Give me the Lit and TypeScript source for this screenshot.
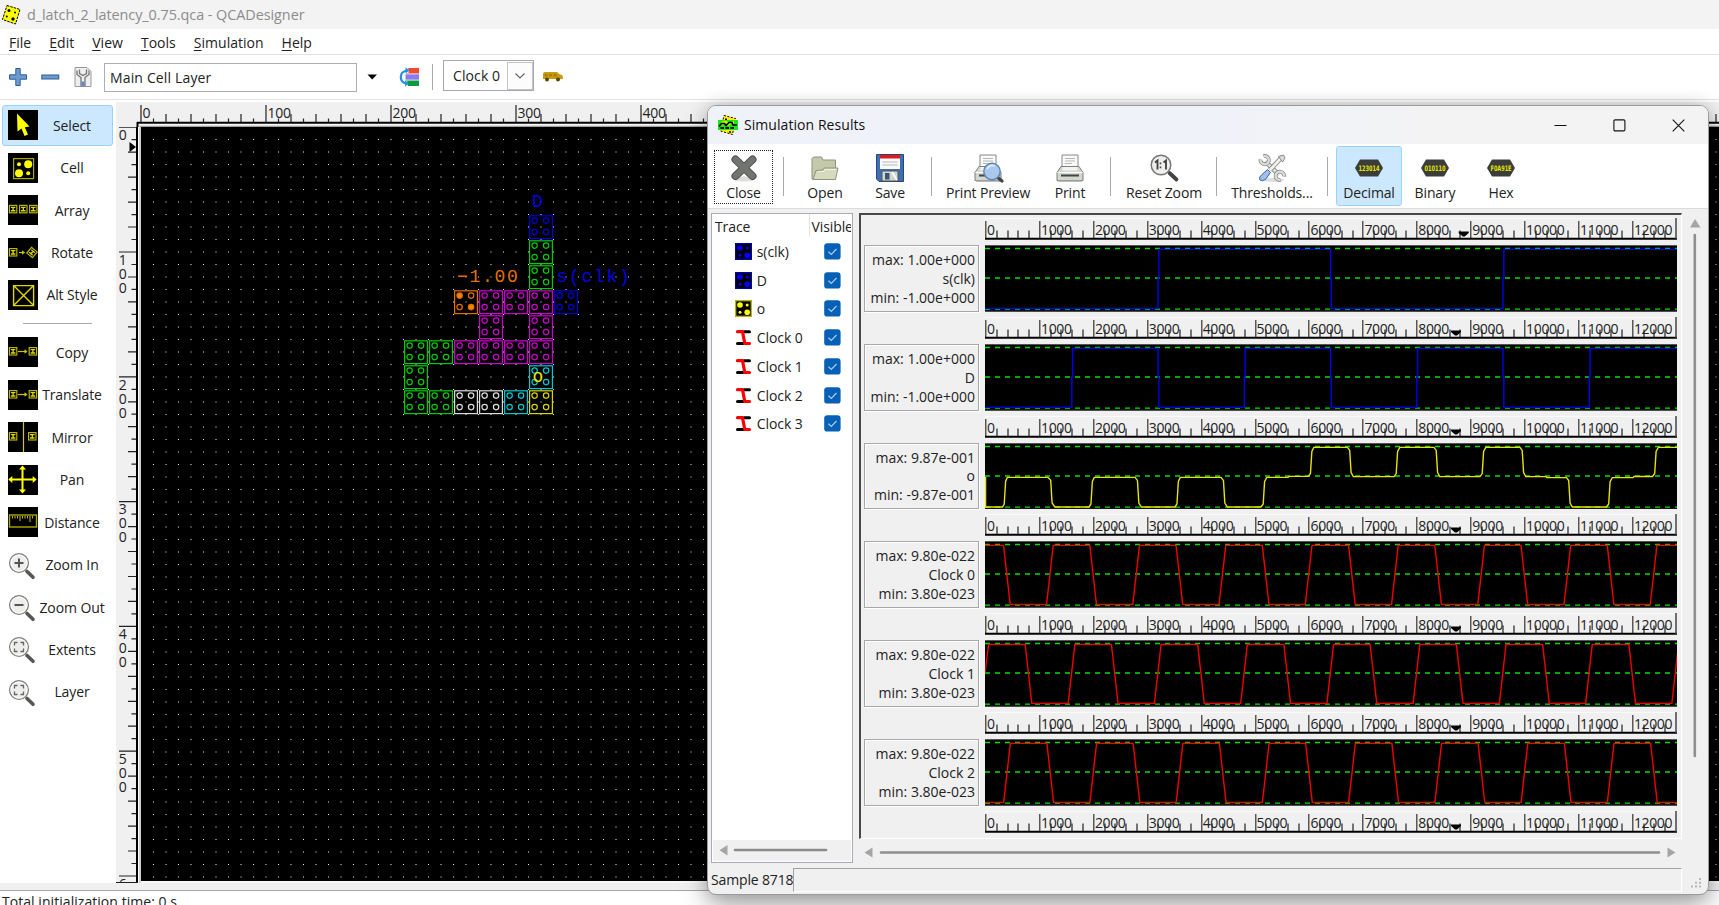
import { LitElement, html, svg, css } from "lit";
import { customElement, property } from "lit/decorators.js";

const range = (n: number) => Array.from({ length: n }, (_, i) => i);

/* ---------- icons ---------- */

const miniCell = (x: number, y: number) => svg`
  <rect x=${x + 0.6} y=${y + 0.6} width="7.4" height="7.4" fill="none" stroke="#b8b400" stroke-width="1.2"/>
  <path d="M${x + 2} ${y + 2.6}h4.600M${x + 2} ${y + 6}h4.600M${x + 4.3} ${y + 2.6}v3.400" stroke="#d8d400" stroke-width="1.4"/>`;

const arrow = (x1: number, x2: number) => svg`
  <path d="M${x1} 14.5H${x2}" stroke="#c8c400" stroke-width="1.2"/>
  <path d="M${x2 - 2.5} 12.3l3 2.2l-3 2.2z" fill="#c8c400"/>`;

const lens = (inner: unknown) => svg`
  <path d="M19.5 19.5l6 5.8" stroke="#555753" stroke-width="3.6" stroke-linecap="round"/>
  <circle cx="11.5" cy="11" r="9.4" fill="#eeeeec" stroke="#7c7e7a" stroke-width="1.3"/>
  <circle cx="11.5" cy="11" r="8" fill="none" stroke="#fff" stroke-width="1"/>
  ${inner}`;

const extents = svg`<path d="M7 9.500V6.500H10M13 6.500H16V9.500M16 12.500V15.500H13M10 15.500H7V12.500" fill="none" stroke="#666" stroke-width="1.3"/>`;

const toolArt: Record<string, unknown> = {
  Select: svg`<path d="M9 3.500L21.500 16.500L16.800 17.200L20 24.500L16.500 26L13.500 18.500L9.500 21.500Z" fill="#ff0"/>`,
  Cell: svg`<rect x="5.600" y="5.600" width="20" height="20" fill="none" stroke="#aaa600" stroke-width="1.2"/>
    <circle cx="11" cy="11.300" r="2" fill="#ff0"/><circle cx="20.200" cy="11.300" r="4" fill="#ff0"/>
    <circle cx="11" cy="20.200" r="4" fill="#ff0"/><circle cx="20.200" cy="20.200" r="2" fill="#ff0"/>`,
  Array: svg`${miniCell(0.8, 9.8)}${miniCell(11, 9.8)}${miniCell(21, 9.8)}`,
  Rotate: svg`${miniCell(0.8, 10)}${arrow(11, 16.5)}<g transform="rotate(40 24 14.500)">${miniCell(19.7, 10.2)}</g>`,
  "Alt Style": svg`<path d="M5.600 5.600H25.600V25.600H5.600ZM5.600 5.600L25.600 25.600M25.600 5.600L5.600 25.600" fill="none" stroke="#dcd800" stroke-width="1.4"/>`,
  Copy: svg`${miniCell(0.8, 10)}${arrow(10, 19)}${miniCell(20.6, 10)}`,
  Translate: svg`${miniCell(0.8, 10)}${arrow(10, 19)}${miniCell(20.6, 10)}`,
  Mirror: svg`${miniCell(0.8, 10)}${miniCell(20, 10)}<path d="M15.500 0V30" stroke="#d0cc00" stroke-width="1.2"/>`,
  Pan: svg`<path d="M14.500 3V26M3 14.500H26" stroke="#ff0" stroke-width="2"/>
    <path d="M14.500 0.500l3.500 4h-7zM14.500 28.500l3.500-4h-7zM0.300 14.500l4-3.500v7zM28.700 14.500l-4-3.500v7z" fill="#ff0"/>`,
  Distance: svg`<rect x="1.500" y="8" width="27" height="12" fill="none" stroke="#aaa600" stroke-width="1.4"/>
    <path d="M4.500 9v2.500M7 9v2.500M9.500 9v2.500M12 9v5M14.500 9v2.500M17 9v2.500M19.500 9v2.500M22 9v6M24.500 9v2.500" stroke="#b8b400" stroke-width="1.1"/>`,
  "Zoom In": lens(svg`<path d="M11.500 6.500v9M7 11h9" stroke="#555" stroke-width="2"/>`),
  "Zoom Out": lens(svg`<path d="M7 11h9" stroke="#555" stroke-width="2"/>`),
  Extents: lens(extents),
  Layer: lens(extents),
};

const printer = svg`
  <path d="M6 1h16v12H6z" fill="#fafafa" stroke="#888a85"/>
  <path d="M9 4.500h10M9 7h10M9 9.500h7" stroke="#b5b7b3" stroke-width="1"/>
  <path d="M5 12.500h18l4 6v8h-26v-8z" fill="#d3d7cf" stroke="#7c7e7a" stroke-linejoin="round"/>
  <path d="M1.500 18.500h25" stroke="#fff"/>
  <path d="M6.500 13h15v3.500H6.500z" fill="#f4f4f4"/>
  <path d="M5 20.500h18v2H5z" fill="#444"/>
  <path d="M2 27.300h24" stroke="#bbb" stroke-width="1.5"/>`;

const chip = (code: string) => svg`
  <path d="M5 5.500h18l5 8.500l-5 8.500H5L0 14z" fill="#3a3d3a"/>
  <text class="chip-code" x="14" y="17.200" text-anchor="middle" textLength="21" lengthAdjust="spacingAndGlyphs">${code}</text>`;

const barArt: Record<string, unknown> = {
  Close: svg`<ellipse cx="14" cy="25" rx="10" ry="2.500" fill="#ddd"/>
    <path d="M5.500 5.500L22.500 22M22.500 5.500L5.500 22" stroke="#4a4c49" stroke-width="8" stroke-linecap="round"/>
    <path d="M5.500 5.500L22.500 22M22.500 5.500L5.500 22" stroke="#727470" stroke-width="6" stroke-linecap="round"/>`,
  Open: svg`<path d="M1 4.500L2.500 3H10.500L12 6H24.500V25H1Z" fill="#c5c9ac" stroke="#8f947b"/>
    <path d="M5 16.500L12 16L13 14H27L24.500 25.500H2Z" fill="#d6dabf" stroke="#8f947b"/>
    <path d="M6.500 17.500H13L14 15.500H25.500" fill="none" stroke="#f1f3e6"/>`,
  Save: svg`<path d="M.5 .5H27.500V27.500H3L.5 25Z" fill="#3f6fae" stroke="#24487d"/>
    <path d="M4 1H24V15H4Z" fill="#fafafa"/><path d="M4 1H24V4.500H4Z" fill="#e01818"/>
    <path d="M6.500 8H21.500M6.500 11H21.500" stroke="#b8b8b8" stroke-width="1.2"/>
    <path d="M6 17H22V27H6Z" fill="#d3d7cf" stroke="#555"/><path d="M9 19h4.500v6.500H9z" fill="#3b5274"/>
    <path d="M16 18L21 26" stroke="#fff" stroke-width="1.5"/>`,
  "Print Preview": svg`${printer}<path d="M22.500 22.500L28 27" stroke="#444" stroke-width="3.400" stroke-linecap="round"/>
    <circle cx="18" cy="17.500" r="8.200" fill="#a9c8ec" stroke="#5b83b5" stroke-width="1.400"/>
    <path d="M13 15q3-5 8-3" stroke="#e0ecfa" stroke-width="1.600" fill="none"/>`,
  Print: printer,
  "Reset Zoom": svg`<path d="M19.500 19l7 6.500" stroke="#444" stroke-width="3.800" stroke-linecap="round"/>
    <circle cx="11" cy="11" r="9.800" fill="#eeeeec" stroke="#777" stroke-width="1.500"/>
    <path d="M5 8.500L7.500 6.500V15.500M13.500 8.500L16 6.500V15.500" stroke="#444" stroke-width="1.900" fill="none"/>
    <path d="M10.500 8.500v1.800M10.500 12.500v1.800" stroke="#444" stroke-width="1.600"/>`,
  "Thresholds...": svg`<ellipse cx="16" cy="26" rx="10" ry="2" fill="#ddd"/>
    <path d="M8 8L20 20" stroke="#8a8c88" stroke-width="4.600"/><path d="M7 7L21 21" stroke="#dfe1dd" stroke-width="2.800"/>
    <path d="M5.500 2A4.200 4.200 0 1 1 2.500 5.500M22.500 26A4.200 4.200 0 1 1 26 22.500" fill="none" stroke="#8a8c88" stroke-width="3.800"/>
    <path d="M5.800 2.100A4.200 4.200 0 1 1 2.500 5.800M22.200 26A4.200 4.200 0 1 1 26 22.200" fill="none" stroke="#dcdedb" stroke-width="2.200"/>
    <path d="M24 3L12 16" stroke="#8a8c88" stroke-width="4.600"/><path d="M24 3L12 16" stroke="#f2f2f0" stroke-width="2.800"/>
    <path d="M20.500 2.500L25.500 1L27 4L24.500 8z" fill="#dcdedb" stroke="#8a8c88"/>
    <path d="M9.500 15.500L12.500 18.500L7.500 25.500Q4 28 1.800 25.800Q.5 23 4 20.500Z" fill="#9fc0ea" stroke="#3c62a0"/>`,
  Decimal: chip("123014"),
  Binary: chip("010110"),
  Hex: chip("F0A91E"),
};

/* ---------- layout design ---------- */

const GREEN = "#00cc00", BLUE = "#0000d0", PINK = "#cc00cc", CYAN = "#00c8d0", WHITE = "#dcdcdc", YELLOW = "#d8d400", ORANGE = "#e07000";
const DESIGN: [number, number, string][] = [
  [5, 0, BLUE], [5, 1, GREEN], [5, 2, GREEN],
  [2, 3, ORANGE], [3, 3, PINK], [4, 3, PINK], [5, 3, PINK], [6, 3, BLUE],
  [3, 4, PINK], [5, 4, PINK],
  [0, 5, GREEN], [1, 5, GREEN], [2, 5, PINK], [3, 5, PINK], [4, 5, PINK], [5, 5, PINK],
  [0, 6, GREEN], [5, 6, CYAN],
  [0, 7, GREEN], [1, 7, GREEN], [2, 7, WHITE], [3, 7, WHITE], [4, 7, CYAN], [5, 7, YELLOW],
];

@customElement("qca-canvas")
class QcaCanvas extends LitElement {
  static styles = css`
    :host { display: block; background: #000; overflow: hidden; }
    svg { display: block; }
    .tag { font-family: "Liberation Mono", monospace; font-size: 18px; letter-spacing: 1.7px; }
  `;
  render() {
    return html`<svg width="1578" height="754" viewBox="0 0 1578 754">
      <defs><pattern id="grid" x="6" y="6" width="25" height="25" patternUnits="userSpaceOnUse">
        ${[6, 18.5].map((x) => [6, 18.5].map((y) => svg`<rect x=${x} y=${y} width="1" height="1" fill="#f0f0f0"/>`))}
      </pattern></defs>
      <rect x="6" y="6" width="1572" height="748" fill="url(#grid)"/>
      ${DESIGN.map(([c, r, color]) => svg`<g transform="translate(${263.2 + c * 25} ${88.4 + r * 25})" stroke=${color} stroke-width="1.2" fill="none">
        <rect x=".4" y=".4" width="22.800" height="22.800"/>
        ${[[5, 5], [16.5, 5], [5, 16.5], [16.5, 16.5]].map(([x, y], i) => svg`<circle cx=${x + 0.4} cy=${y + 0.2} r="2.700" fill=${color === ORANGE && (i === 0 || i === 3) ? "#ff8000" : "none"}/>`)}
      </g>`)}
      <text class="tag" x="391" y="80" fill="#0000e0">D</text>
      <text class="tag" x="316" y="154.800" fill="#e07000">−1.00</text>
      <text class="tag" x="415.500" y="154.800" fill="#0000e0">s(clk)</text>
      <text class="tag" x="391.500" y="254.800" fill="#e8e400">o</text>
    </svg>`;
  }
}

/* ---------- trace plots ---------- */

const PX = 53.9;

@customElement("trace-ruler")
class TraceRuler extends LitElement {
  @property({ type: Number }) marker = 471;
  static styles = css`
    :host { display: block; height: 22px; }
    svg { display: block; overflow: visible; }
    text { font: 14px "Open Sans", "Noto Sans", sans-serif; letter-spacing: -0.35px; fill: #222; }
  `;
  render() {
    return html`<svg width="692" height="22" viewBox="0 0 692 22">
      <path d="M0 .5H691" stroke="#fafafa"/>
      ${range(13).map((k) => svg`<text x=${k * PX + 2.1} y="17">${k * 1000}</text>`)}
      <path d=${range(13).map((k) => `M${Math.round(k * PX) + 0.8} 3V20`).join("")} stroke="#333" stroke-width="1.200"/>
      <path d=${range(65).filter((k) => k % 5 && k < 64).map((k) => `M${Math.round((k * PX) / 5) + 1} 12.500V20`).join("")} stroke="#222" stroke-width="1.200"/>
      <path d="M0 20.800H692" stroke="#000" stroke-width="1.900"/>
      <path d="M691 0V21" stroke="#444" stroke-width="1.500"/>
      <path d="M${this.marker - 5} 13.500h10v1.500l-4 3.500h-2l-4-3.500z" fill="#000"/>
    </svg>`;
  }
}

const HI = 4.4, LO = 63.4;
const square = (edges: number[]) => {
  let hi = false, d = `M0 ${LO}`;
  for (const e of edges) {
    const x = 1 + (e * PX) / 1000;
    d += `H${x - 0.4}V33H${x + 0.4}V${hi ? LO : HI}`;
    hi = !hi;
  }
  return d + "H692";
};
const clock = (start: number) => {
  let d = "";
  for (let k = 0; k < 10; k++) {
    const x = start + k * 86.24;
    d += `${k ? "L" : "M"}${x} ${HI}H${x + 36.6}L${x + 43.2} ${LO}H${x + 79.6}`;
  }
  return d;
};
const output = () => {
  const steps: [number, number, number][] = [
    [18.5, 21.5, 34.4], [64, 69, 64], [105, 108.5, 34.4], [151, 155.5, 64], [191, 194.5, 34.4], [237, 241.5, 64],
    [277, 281, 34.4], [303, 304, 33.4], [324.5, 328, 4.4], [363.5, 367.5, 33.6], [410, 414, 4.4], [450, 454, 33.6],
    [496, 500, 4.4], [536, 540, 33.6], [561, 562, 34.6], [582.5, 586.5, 64], [622.5, 626.5, 34.6], [648, 649, 33.5],
    [668.5, 672.5, 4.4],
  ];
  let y = 64, d = "M.6 34V64";
  for (const [a, b, t] of steps) {
    const m = (a + b) / 2, s = Math.sign(t - y);
    d += Math.abs(t - y) < 3 ? `H${a}L${b} ${t}` : `H${a - 1}L${m - 0.8} ${y + s * 3}L${m + 0.6} ${t - s * 4}L${b + 0.8} ${t}`;
    y = t;
  }
  return d + "H692";
};

interface Trace { name: string; max: string; min: string; color: string; path: string; }
const TRACES: Trace[] = [
  { name: "s(clk)", max: "1.00e+000", min: "-1.00e+000", color: "#0000f0", path: square([3200, 6400, 9600]) },
  { name: "D", max: "1.00e+000", min: "-1.00e+000", color: "#0000f0", path: square([1600, 3200, 4800, 6400, 8000, 9600, 11200]) },
  { name: "o", max: "9.87e-001", min: "-9.87e-001", color: "#e8e400", path: output() },
  { name: "Clock 0", max: "9.80e-022", min: "3.80e-023", color: "#f40000", path: clock(-18) },
  { name: "Clock 1", max: "9.80e-022", min: "3.80e-023", color: "#f40000", path: clock(3.6).replace("M3.6", "M0 33L3.6") },
  { name: "Clock 2", max: "9.80e-022", min: "3.80e-023", color: "#f40000", path: clock(-60.9) },
];

@customElement("trace-plot")
class TracePlot extends LitElement {
  @property({ attribute: false }) trace!: Trace;
  @property({ type: Number }) marker = 471;
  static styles = css`
    :host { display: grid; grid-template-columns: 115px 692px; column-gap: 6px; grid-template-rows: 22px 66.75px; row-gap: 5px; padding-bottom: 5px; }
    trace-ruler { grid-column: 2; }
    .info { display: flex; flex-direction: column; justify-content: center; text-align: right; padding: 2px 3px 0 0; line-height: 18.8px;
      border: 1px solid #a8a8a8; box-shadow: inset 1px 1px #fff, 1px 1px #fff; font-size: 14px; box-sizing: border-box; white-space: nowrap; }
    svg { display: block; background: #000; }
  `;
  render() {
    const t = this.trace;
    return html`<trace-ruler .marker=${this.marker}></trace-ruler>
      <div class="info"><span>max: ${t.max}</span><span>${t.name}</span><span>min: ${t.min}</span></div>
      <svg width="692" height="66.750" viewBox="0 0 692 66.750">
        <path d="M0 3.500H692M0 33H692M0 64.200H692" stroke="#00e000" stroke-width="1.300" stroke-dasharray="5 5"/>
        <path d=${t.path} fill="none" stroke=${t.color} stroke-width="1.400"/>
        <path d="M0 .4H692M0 66.300H692" stroke="#777" stroke-width=".8"/>
      </svg>`;
  }
}

/* ---------- simulation window ---------- */

const cellIcon = (c: string) => svg`<rect width="17" height="17" fill="#000"/><rect x=".7" y=".7" width="15.600" height="15.600" fill="none" stroke=${c} stroke-width="1.200" opacity=".8"/>
  <circle cx="5" cy="5" r="2.800" fill=${c}/><circle cx="12.200" cy="12.200" r="2.800" fill=${c}/><circle cx="12.200" cy="5" r="1.500" fill=${c}/><circle cx="5" cy="12.200" r="1.500" fill=${c}/>`;
const clockIcon = svg`<path d="M9 2.700H14.500M2.500 14.500H8" stroke="#000" stroke-width="3" stroke-linecap="round"/>
  <path d="M2.500 2.700H7.500L9.800 14.500H14.500" fill="none" stroke="#f00" stroke-width="3.200" stroke-linecap="round" stroke-linejoin="round"/>`;

@customElement("sim-window")
class SimWindow extends LitElement {
  static styles = css`
    :host { display: flex; flex-direction: column; box-sizing: border-box; background: #f0f0f0; overflow: hidden; border-radius: 9px;
      border: 1px solid #9b9b9b; }
    svg { display: block; flex: none; }
    .title { height: 38px; display: flex; align-items: center; background: linear-gradient(90deg, #f0f2f9 50%, #f3f3f3 75%); padding: 0 23px 0 10px; }
    .title span { flex: 1; margin: -2px 0 0 6px; font-size: 14px; letter-spacing: 0.06px; color: #111; }
    .title .controls { display: flex; gap: 46px; }
    .bar { height: 65px; box-sizing: border-box; border-bottom: 1px solid #dcdcdc; background: #fff; display: flex; align-items: flex-start; padding: 2px 0 0 6px; }
    .tool { height: 60px; box-sizing: border-box; display: flex; flex-direction: column; align-items: center; padding-top: 7px; border: 1px solid transparent; border-radius: 3px; flex: none; }
    .tool span { margin-top: 1px; line-height: 20px; font-size: 14px; letter-spacing: -0.15px; color: #222; white-space: nowrap; }
    .tool.on { background: #cce8ff; border-color: #99d1ff; }
    .tool.focus { height: 54px; margin-top: 4px; padding-top: 3px; border: 1px dotted #222; border-radius: 0; }
    .sep { width: 1px; height: 39px; background: #aaa; margin-top: 11px; flex: none; }
    .chip-code { font: bold 7.5px "DejaVu Sans", sans-serif; fill: #e8e400; }
    .body { flex: 1; min-height: 0; display: grid; grid-template-columns: 142px 847px; column-gap: 7px; padding: 4px 0 4px 3px; grid-template-rows: 650px; }
    .list { border: 1px solid #a9aab6; background: #fff; display: flex; flex-direction: column; overflow: hidden; font-size: 14px; color: #222; }
    .head { display: grid; grid-template-columns: 97px 42px; height: 23px; line-height: 25px; }
    .head span { padding-left: 3px; white-space: nowrap; overflow: hidden; letter-spacing: -0.1px; }
    .head span + span { border-left: 1px solid #e2e2e2; padding-left: 1.500px; }
    .row { height: 28.75px; display: grid; grid-template-columns: 17px 62.3px 17px; padding-left: 23px; column-gap: 4.8px; align-items: center; letter-spacing: -0.1px; }
    .check { width: 17px; height: 17px; }
    .hscroll { margin-top: auto; height: 21px; background: #f0f0f0; border: 1px solid #fff; border-top: 0; }
    .plots { display: grid; grid-template-columns: 823px 24px; grid-template-rows: 626px 24px; margin-left: -1px; }
    .view { border-left: 2px solid #484848; border-top: 2px solid #484848; border-right: 1px solid #fff; border-bottom: 1px solid #fff; padding: 3px 0 0 3px; overflow: hidden; box-sizing: border-box; }
    .last { margin-left: 121px; }
    .status { height: 26px; display: grid; grid-template-columns: 82px 889px 1fr; padding-left: 3px; font-size: 14px; margin-bottom: 1px; }
    .status > span { line-height: 26px; letter-spacing: -0.15px; white-space: nowrap; }
    .field { border: 1px solid #a0a0a0; border-right-color: #fff; border-bottom-color: #fff; height: 22px; margin-top: 1px; }
    .grip { margin: 10px 0 0 8px; }
  `;
  private tool(name: string, width: number, left: number, cls = "") {
    return html`<div class="tool ${cls}" style="width:${width}px;margin-left:${left}px">
      <svg width="28" height="28" viewBox="0 0 28 28" fill="none" overflow="visible">${barArt[name]}</svg><span>${name}</span></div>`;
  }
  private sep(left: number) { return html`<div class="sep" style="margin-left:${left}px"></div>`; }
  render() {
    const rows: [string, unknown][] = [
      ["s(clk)", cellIcon("#0000ff")], ["D", cellIcon("#0000ff")], ["o", cellIcon("#ffff00")],
      ["Clock 0", clockIcon], ["Clock 1", clockIcon], ["Clock 2", clockIcon], ["Clock 3", clockIcon],
    ];
    return html`
      <div class="title">
        <svg width="20" height="20" viewBox="0 0 20 20"><path d="M6 .5L17.500 3.500L14.500 19.500L2.500 16Z" fill="#fff000" stroke="#000" stroke-dasharray="2 1.500"/>
          <path d="M0 5h20v10H0z" fill="#18e818"/><path d="M3 7L7 5.500L12 8L16 6V9H13L10 11L7 9L4 10.500Z" fill="#d8f000"/>
          <path d="M1 11.500l2.500-3h3l1.500 2l3-3h3l1 2.500h4" fill="none" stroke="#000" stroke-width="1.700"/>
          <path d="M2.500 13h15" stroke="#000" stroke-width="1.800" stroke-dasharray="3.500 1.500"/><path d="M7 4.300h2M11 17h2" stroke="#000" stroke-width="1.500"/></svg>
        <span>Simulation Results</span>
        <div class="controls">
          <svg width="13" height="13"><path d="M.5 6.500H12.500" stroke="#111" stroke-width="1.100"/></svg>
          <svg width="13" height="13"><rect x=".9" y=".9" width="11" height="11" rx="1.200" fill="none" stroke="#111" stroke-width="1.100"/></svg>
          <svg width="13" height="13"><path d="M.7 .7L12.300 12.300M12.300 .7L.7 12.300" stroke="#111" stroke-width="1.100"/></svg>
        </div>
      </div>
      <div class="bar">
        ${this.tool("Close", 59, 0, "focus")}${this.sep(10)}
        ${this.tool("Open", 56, 13)}${this.tool("Save", 56, 9)}${this.sep(13)}
        ${this.tool("Print Preview", 94, 9)}${this.tool("Print", 56, 7)}${this.sep(12)}
        ${this.tool("Reset Zoom", 88, 9)}${this.sep(8)}
        ${this.tool("Thresholds...", 94, 8)}${this.sep(8)}
        ${this.tool("Decimal", 66, 8, "on")}${this.tool("Binary", 66, 0)}${this.tool("Hex", 66, 0)}
      </div>
      <div class="body">
        <div class="list">
          <div class="head"><span>Trace</span><span>Visible</span></div>
          ${rows.map(([n, icon]) => html`<div class="row"><svg width="17" height="17" viewBox="0 0 17 17">${icon}</svg><span>${n}</span>
            <svg class="check" viewBox="0 0 17 17"><rect x=".2" y=".2" width="16.400" height="16.400" rx="3.200" fill="#0560b6"/><path d="M4.500 8.800L7.300 11.500L12.500 6" fill="none" stroke="#a9cdee" stroke-width="1.200"/></svg></div>`)}
          <div class="hscroll"><svg width="130" height="20"><path d="M14.500 5V15.500L6.500 10.300Z" fill="#a5a5a5"/><path d="M22 10H113" stroke="#8a8a8a" stroke-width="2.600" stroke-linecap="round"/></svg></div>
        </div>
        <div class="plots">
          <div class="view">
            ${TRACES.map((t, i) => html`<trace-plot .trace=${t} .marker=${i === 0 ? 478.7 : 471}></trace-plot>`)}
            <trace-ruler class="last"></trace-ruler>
          </div>
          <svg width="24" height="626"><path d="M8 14.500H18.500L13 6Z" fill="#a5a5a5"/><path d="M12.800 22V543" stroke="#8f8f8f" stroke-width="2.600" stroke-linecap="round"/></svg>
          <svg width="823" height="24"><path d="M13.500 8.500V18.500L5.500 13.500Z" fill="#a5a5a5"/><path d="M22 13.500H800" stroke="#8f8f8f" stroke-width="2.600" stroke-linecap="round"/><path d="M808.500 8.500V18.500L816.500 13.500Z" fill="#a5a5a5"/></svg>
        </div>
      </div>
      <div class="status"><span>Sample 8718</span><div class="field"></div>
        <svg class="grip" width="13" height="13"><path d="M9 2h2M5 5.700h2M9 5.700h2M1 9.500h2M5 9.500h2M9 9.500h2" stroke="#b8b8b8" stroke-width="2"/></svg></div>`;
  }
}

/* ---------- main window ---------- */

@customElement("app-root")
class AppRoot extends LitElement {
  static styles = css`
    :host { display: block; position: relative; width: 1719px; height: 905px; overflow: hidden; background: #fff; color: #222;
      font-family: "Open Sans", "Noto Sans", sans-serif; font-size: 14px; }
    svg { display: block; flex: none; }
    .main { display: flex; flex-direction: column; height: 100%; }
    .title { height: 29px; flex: none; background: #f3f3f3; display: flex; align-items: center; padding-left: 1px; color: #8c8c8c; font-size: 14.4px; letter-spacing: -0.05px; }
    .title span { margin-left: 6px; }
    .menu { height: 25px; flex: none; border-bottom: 1px solid #e2e2e2; display: flex; align-items: center; gap: 18px; padding: 0 0 0 9px; letter-spacing: 0.02px; }
    .menu span { padding-top: 1.500px; }
    .menu u { text-decoration-thickness: 1px; text-underline-offset: 2px; }
    .bar { height: 45px; box-sizing: border-box; flex: none; border-bottom: 1px solid #e2e2e2; display: flex; align-items: center; }
    .layer { box-sizing: border-box; width: 253px; height: 29px; border: 1px solid #adadb8; margin: 1px 10px 0 12px; padding-left: 5px; line-height: 28px; letter-spacing: 0.15px; }
    .split { width: 1px; height: 26px; background: #aaa; margin: 0 10px 0 13px; }
    .combo { box-sizing: border-box; width: 91px; height: 31px; margin-bottom: 3px; border: 1px solid #a8a8b2; display: flex; align-items: center; justify-content: space-between; padding-left: 9px; letter-spacing: 0.1px; }
    .combo div { width: 26px; height: 28px; border: 1px solid #c4c4c8; box-sizing: border-box; display: grid; place-items: center; background: #fcfcfc; }
    .work { height: 783px; flex: none; display: grid; grid-template-columns: 116px 25px 1fr; grid-template-rows: 27px 756px; background: #f0f0f0; }
    .side { grid-row: 1 / 3; background: #fff; padding-top: 4px; box-sizing: border-box; }
    .item { height: 42.45px; display: flex; align-items: center; padding-left: 2px; }
    .item div { height: 41px; width: 111px; box-sizing: border-box; display: flex; align-items: center; padding-left: 5px; border: 1px solid transparent; border-radius: 3px; }
    .item.on div { background: #cce8ff; border-color: #99d1ff; }
    .ico { width: 30px; height: 30px; background: #000; }
    .ico.plain { background: none; }
    .item span { width: 68px; text-align: center; letter-spacing: -0.1px; white-space: nowrap; }
    .rule { height: 15px; display: grid; place-items: center; padding-right: 2px; }
    .rule i { width: 69px; height: 1px; background: #aaa; }
    .hr { grid-column: 2 / 4; }
    .rt { font: 14px "Open Sans", "Noto Sans", sans-serif; fill: #222; letter-spacing: -0.3px; }
    .canvas { background: #f8f8f8; }
    qca-canvas { height: 754px; }
    .log { flex: 1; margin-top: 7px; border-top: 1px solid #a4a4ac; padding-left: 2px; line-height: 22px; letter-spacing: 0.05px; white-space: nowrap; background: #fff; }
    .foot { flex: 1; display: flex; flex-direction: column; background: #f0f0f0; }
    .shade { position: absolute; left: 708px; top: 105px; width: 1000px; height: 789px; border-radius: 9px; box-shadow: 0 2px 18px rgba(0, 0, 0, 0.25), 0 16px 30px rgba(0, 0, 0, 0.25); }
    sim-window { position: absolute; left: 707px; top: 105px; width: 1002px; height: 790px; }
  `;
  private item(name: string) {
    const plain = ["Zoom In", "Zoom Out", "Extents", "Layer"].includes(name);
    return html`<div class="item ${name === "Select" ? "on" : ""}"><div>
      <svg class="ico ${plain ? "plain" : ""}" viewBox=${plain ? "0.5 -2 30 30" : "0 0 30 30"}>${toolArt[name]}</svg><span>${name}</span></div></div>`;
  }
  render() {
    const menus = ["File", "Edit", "View", "Tools", "Simulation", "Help"];
    return html`
      <div class="main">
        <div class="title">
          <svg width="20" height="22" viewBox="0 0 20 22"><path d="M6 1.500L19 5.500L14.500 20L1.500 15.500Z" fill="#ff0" stroke="#000" stroke-dasharray="2.500 1"/>
            <circle cx="8" cy="6.500" r="1.500"/><circle cx="14" cy="8.500" r="1"/><circle cx="5.800" cy="12.500" r="1"/><circle cx="12" cy="15" r="1.700"/></svg>
          <span>d_latch_2_latency_0.75.qca - QCADesigner</span>
        </div>
        <div class="menu">${menus.map((m) => html`<span><u>${m[0]}</u>${m.slice(1)}</span>`)}</div>
        <div class="bar">
          <svg width="92" height="24"><path d="M15.800 3.500h4.400v6.300h6.300v4.400h-6.300v6.300h-4.400v-6.300H9.500V9.800h6.300z" fill="#6d9bd0" stroke="#2f5d96"/>
            <rect x="41.800" y="10" width="17" height="4" fill="#6d9bd0" stroke="#2f5d96"/>
            <path d="M75 2.500h12l4 4v15H75z" fill="#eee" stroke="#999"/><path d="M77 5.500v4l4 3v9M89 5.500v4l-4 3v9M79.500 4.500v4l3.500 2l3.500-2v-4" fill="none" stroke="#777" stroke-width="1.300"/>
            <path d="M81.500 16.500h3v5h-3z" fill="#5c88c4"/></svg>
          <div class="layer">Main Cell Layer</div>
          <svg width="10" height="6"><path d="M.5 .5H10L5.200 5.500Z" fill="#000"/></svg>
          <svg width="42" height="20"><path d="M31 1H42V6.500H28.500Z" fill="#f04a30"/><path d="M28.500 7.300H42V12.700H28.500Z" fill="#8a7cf0"/><path d="M28.500 13.500H42V19H31Z" fill="#0c9a40"/>
            <path d="M31.500 3.500Q23.800 4.500 23.800 10Q23.800 15.500 30 16.700" fill="none" stroke="#fff" stroke-width="4.500"/>
            <path d="M30 3.500Q23.800 4.500 23.800 10Q23.800 15.500 29.500 16.500" fill="none" stroke="#2090f0" stroke-width="2.200"/><path d="M28.500 .2L32.500 3.400L28.500 6.600z" fill="#2090f0"/><path d="M28 13.200L31.500 16.500L28 19.700z" fill="#2090f0"/></svg>
          <div class="split"></div>
          <div class="combo">Clock 0<div><svg width="12" height="8"><path d="M1.500 1.500L6 6L10.500 1.500" fill="none" stroke="#666" stroke-width="1.200"/></svg></div></div>
          <svg width="30" height="12"><path d="M9 3q0-2 2-2h11q2 0 3 2l3 1q1 1 1 4H9z" fill="#c79a10"/><path d="M10.500 3h3v2.500h-3zM15 3h3v2.500h-3zM19.500 3h3v2.500h-3z" fill="#a8800c"/><circle cx="13" cy="8.500" r="2" fill="#5a4606"/><circle cx="24" cy="8.500" r="2" fill="#5a4606"/></svg>
        </div>
        <div class="work">
          <div class="side">
            ${["Select", "Cell", "Array", "Rotate", "Alt Style"].map((n) => this.item(n))}
            <div class="rule"><i></i></div>
            ${["Copy", "Translate", "Mirror", "Pan", "Distance", "Zoom In", "Zoom Out", "Extents", "Layer"].map((n) => this.item(n))}
          </div>
          <svg class="hr" width="1603" height="27" viewBox="0 -1 1603 27">
            <rect y="-1" width="1603" height="2" fill="#fff"/>
            <rect x="22" y="22" width="1581" height="4" fill="#f8f8f8"/>
            ${range(5).map((k) => svg`<text class="rt" x=${k * 125 + 26.5} y="17.400">${k * 100}</text>`)}
            <path d=${range(127).map((k) => `M${(k * 12.5 + 25).toFixed(1)} ${k % 10 === 0 ? 4 : k % 2 ? 17.5 : 13}V21`).join("")} stroke="#222" stroke-width="1.200"/>
            <path d="M21 21.800H1603" stroke="#000" stroke-width="2"/>
            <path d="M21.500 21V26" stroke="#000" stroke-width="2"/>
            <path d="M23.500 25.300H1603" stroke="#888" stroke-width="1"/>
          </svg>
          <svg width="25" height="756" viewBox="0 0 25 756">
            <rect x="22" width="3" height="756" fill="#fafafa"/>
            ${range(7).map((k) => (k < 6 ? String(k * 100) : "6").split("").map((c, j) => svg`<text class="rt" x="2.700" y=${k * 124.8 + 13 + j * 14}>${c}</text>`))}
            <path d=${range(61).map((k) => `M${k % 10 === 0 ? 3 : k % 2 ? 15.5 : 12} ${(k * 12.48 + 0.2).toFixed(1)}H21`).join("")} stroke="#222" stroke-width="1.200"/>
            <path d="M21 0V756" stroke="#000" stroke-width="2"/><path d="M24 0V756" stroke="#aaa" stroke-width="1"/>
            <path d="M13.500 15V25L20 20Z" fill="#000"/>
            <path d="M0 755.500H22" stroke="#222"/>
          </svg>
          <div class="canvas"><qca-canvas></qca-canvas></div>
        </div>
        <div class="foot"><div class="log">Total initialization time: 0 s</div></div>
      </div>
      <div class="shade"></div>
      <sim-window></sim-window>`;
  }
}
